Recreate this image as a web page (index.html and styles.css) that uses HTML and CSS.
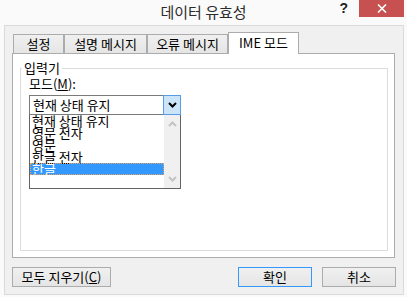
FILE: index.html
```html
<!DOCTYPE html>
<html>
<head>
<meta charset="utf-8">
<link rel="stylesheet" href="styles.css">
</head>
<body>

<div class="titlebar">
    <span></span>
    <div class="title">데이터 유효성</div>
    <div class="controls">
      <span class="help">?</span>
      <span class="close">
        <svg width="10" height="9" viewBox="0 0 10 9"><path d="M1 0.5 L9 8.5 M9 0.5 L1 8.5" stroke="#fff" stroke-width="1.6" fill="none"/></svg>
      </span>
    </div>
</div>

<div class="client">
    <div class="tabs">
      <div class="tab tab-setup">설정</div>
      <div class="tab tab-input">설명 메시지</div>
      <div class="tab tab-error">오류 메시지</div>
      <div class="tab active">IME 모드</div>
    </div>

    <div class="panel">
      <fieldset class="group">
        <legend>입력기</legend>
        <div class="label">모드(<u>M</u>):</div>
        <div class="combo">
          <div class="combo-value">현재 상태 유지</div>
          <div class="combo-btn">
            <svg width="9" height="6" viewBox="0 0 9 6"><path d="M1 1 L4.5 4.5 L8 1" stroke="#000" stroke-width="2" fill="none"/></svg>
          </div>
        </div>
        <div class="list">
          <div class="items">
            <div class="item">현재 상태 유지</div>
            <div class="item">영문 전자</div>
            <div class="item">영문</div>
            <div class="item">한글 전자</div>
            <div class="item selected">한글</div>
          </div>
          <div class="scrollbar">
            <svg width="9" height="6" viewBox="0 0 9 6"><path d="M1 5 L4.5 1.5 L8 5" stroke="#c4c4c4" stroke-width="2" fill="none"/></svg>
            <svg width="9" height="6" viewBox="0 0 9 6"><path d="M1 1 L4.5 4.5 L8 1" stroke="#c4c4c4" stroke-width="2" fill="none"/></svg>
          </div>
        </div>
      </fieldset>
    </div>

    <div class="buttons">
      <button class="btn btn-clear">모두 지우기(<u>C</u>)</button>
      <button class="btn btn-ok">확인</button>
      <button class="btn btn-cancel">취소</button>
    </div>
</div>

</body>
</html>
```

FILE: styles.css
```css
body {
    margin: 0;
    width: 407px;
    height: 297px;
    background-color: #fafafa;
    font-family: "Noto Sans CJK KR", "Noto Sans", sans-serif;
    font-size: 13px;
    color: #000;
    overflow: hidden;
}

.titlebar {
    display: grid;
    grid-template-columns: 1fr auto 1fr;
    height: 25px;
}

.title {
    font-size: 15px;
    line-height: 23px;
    color: #2b2b2b;
}

.controls {
    display: flex;
    justify-content: flex-end;
    align-items: flex-start;
    padding-right: 3px;
}

.help {
    font-family: "Liberation Sans", Arial, sans-serif;
    font-weight: bold;
    font-size: 14px;
    line-height: 14px;
    color: #222;
    margin: 1px 11px 0 0;
}

.close {
    display: flex;
    align-items: center;
    justify-content: center;
    width: 45px;
    height: 17px;
    background-color: #c75050;
}

.client {
    box-sizing: border-box;
    margin-left: 4px;
    width: 400px;
    height: 270px;
    border: 1px solid #dadada;
    background-color: #f0f0f0;
}

.tabs {
    display: flex;
    align-items: flex-end;
    padding: 6px 0 0 8px;
}

.tab {
    box-sizing: border-box;
    height: 19px;
    border: 1px solid #acacac;
    border-bottom: none;
    background: linear-gradient(#f0f0f0, #e5e5e5);
    line-height: 17px;
    text-align: center;
}

.tab-setup { width: 51px; }
.tab-input { width: 83px; }
.tab-error { width: 81px; }

.tab.active {
    position: relative;
    z-index: 1;
    width: 71px;
    height: 22px;
    margin-bottom: -1px;
    background: #fff;
    line-height: 19px;
}

.panel {
    box-sizing: border-box;
    margin-left: 7px;
    width: 383px;
    height: 205px;
    border: 1px solid #acacac;
    background-color: #fff;
    padding-top: 7px;
}

.group {
    box-sizing: border-box;
    margin: 0 0 0 7px;
    width: 368px;
    height: 190px;
    padding: 0 8px;
    border: 1px solid #dcdcdc;
    min-inline-size: 0;
}

.group legend {
    margin-left: -7px;
    padding: 0 2px;
    line-height: 14px;
}

.label {
    line-height: 14px;
    margin: 2px 0 4px;
}

.combo {
    display: flex;
    width: 152px;
    height: 20px;
}

.combo-value {
    flex: 1;
    border: 1px solid #7a7a7a;
    border-right: none;
    padding-left: 3px;
    line-height: 18px;
}

.combo-btn {
    box-sizing: border-box;
    width: 18px;
    display: flex;
    align-items: center;
    justify-content: center;
    border: 1px solid #569de5;
    background-color: #cce4f7;
}

.list {
    box-sizing: border-box;
    display: flex;
    width: 152px;
    height: 75px;
    margin-top: -1px;
    border: 1px solid #646464;
    background-color: #fff;
}

.items {
    flex: 1;
}

.item {
    height: 12px;
    line-height: 12px;
    padding-left: 2px;
    white-space: nowrap;
}

.item.selected {
    background-color: #3399ff;
    color: #fff;
    outline: 1px dotted #e8a060;
    outline-offset: -1px;
}

.scrollbar {
    width: 16px;
    display: flex;
    flex-direction: column;
    justify-content: space-between;
    align-items: center;
    padding: 6px 0 6px;
    box-sizing: border-box;
    background-color: #f0f0f0;
}

.buttons {
    display: flex;
    margin-top: 9px;
    padding: 0 7px;
}

.btn {
    box-sizing: border-box;
    height: 20px;
    padding: 0;
    border: 1px solid #acacac;
    background: linear-gradient(#f0f0f0, #e5e5e5);
    font-family: inherit;
    font-size: 13px;
    line-height: 18px;
    color: #000;
}

.btn-clear { width: 99px; }

.btn-ok {
    width: 74px;
    margin-left: auto;
    border-color: #3399ff;
}

.btn-cancel {
    width: 74px;
    margin-left: 10px;
}
```
